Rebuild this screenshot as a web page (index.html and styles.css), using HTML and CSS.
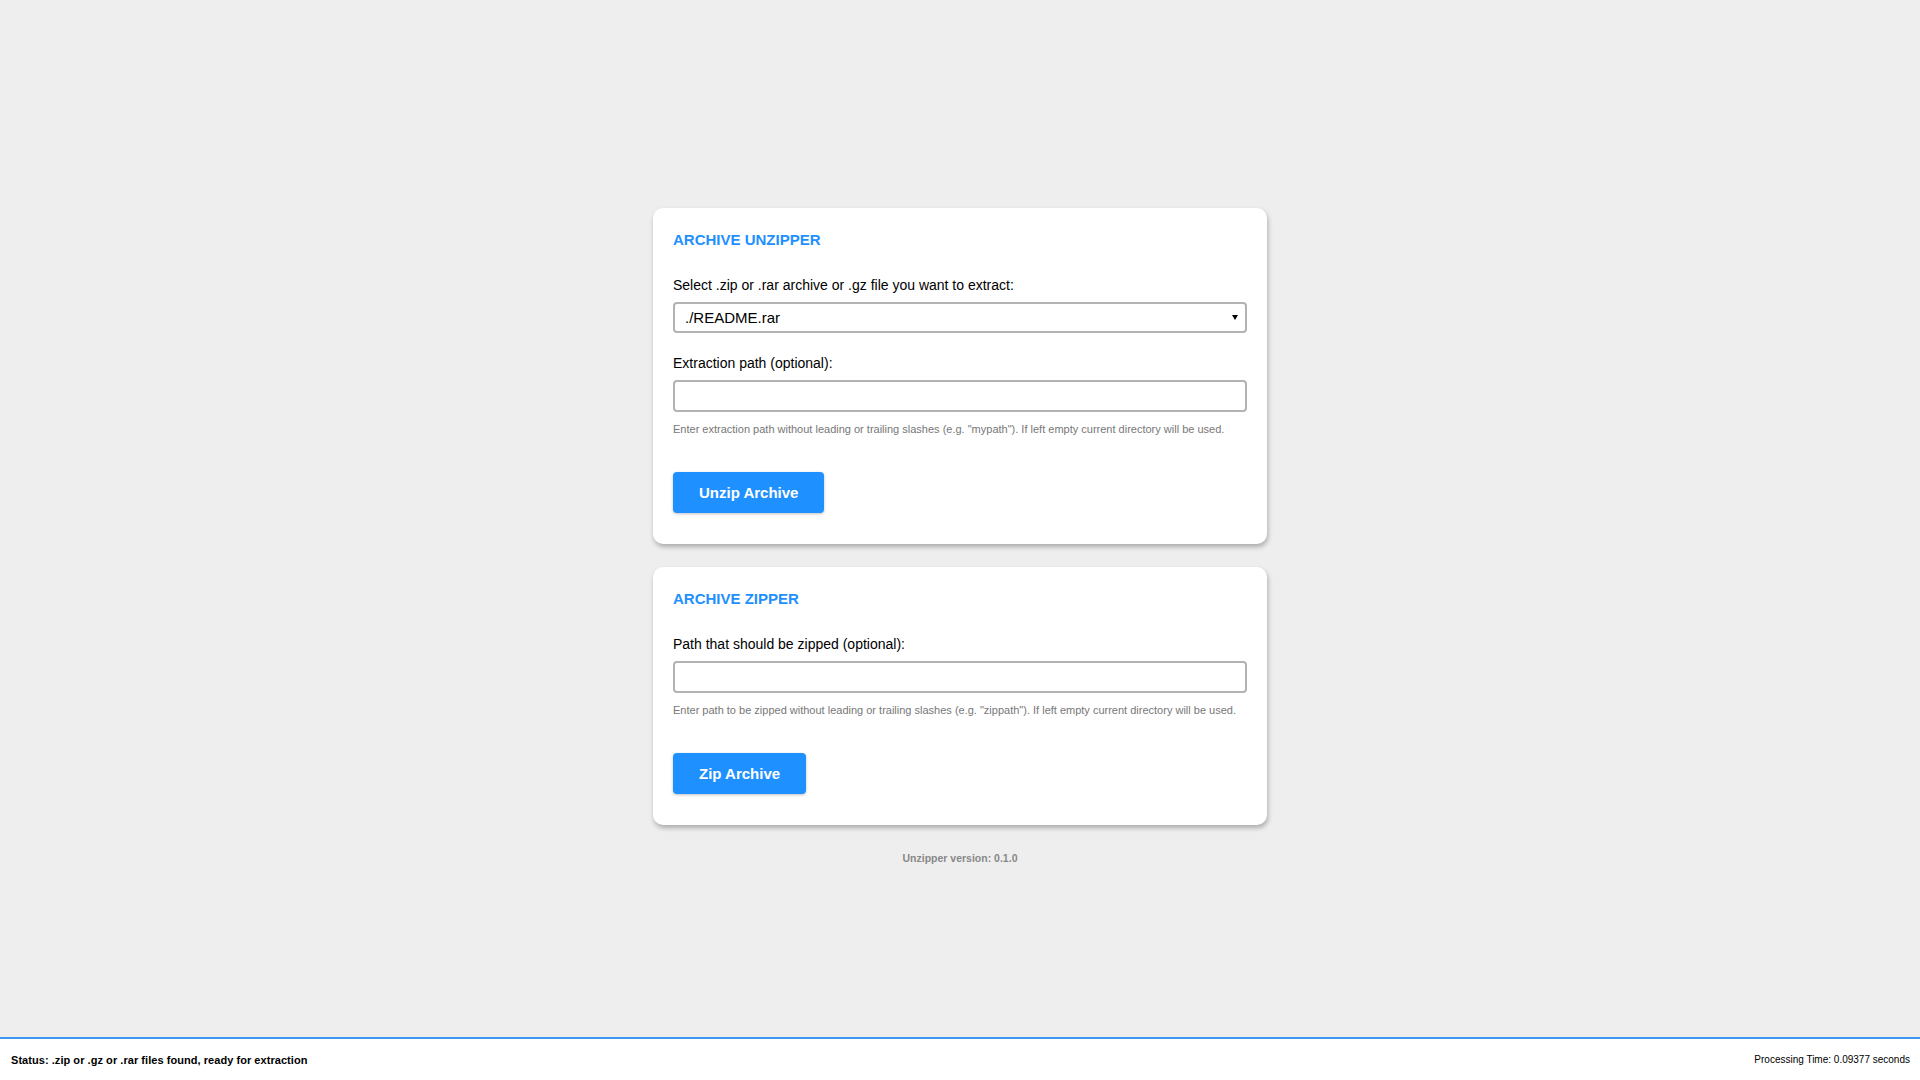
FILE: index.html
```html
<!DOCTYPE html>
<html lang="en">
<head>
    <meta charset="UTF-8">
    <meta name="viewport" content="width=device-width, initial-scale=1.0">
    <title>Unzipper</title>
    <link rel="stylesheet" href="styles.css">
</head>
<body>
    <main class="wrapper">
        <form class="card" action="#" method="post">
            <h2>Archive Unzipper</h2>
            <div class="field">
                <label for="zipfile">Select .zip or .rar archive or .gz file you want to extract:</label>
                <div class="select-wrap">
                    <select id="zipfile" name="zipfile">
                        <option value="./README.rar">./README.rar</option>
                    </select>
                </div>
            </div>
            <div class="field">
                <label for="extpath">Extraction path (optional):</label>
                <input type="text" id="extpath" name="extpath">
                <p class="info">Enter extraction path without leading or trailing slashes (e.g. "mypath"). If left empty current directory will be used.</p>
            </div>
            <button type="submit" class="btn">Unzip Archive</button>
        </form>

        <form class="card" action="#" method="post">
            <h2>Archive Zipper</h2>
            <div class="field">
                <label for="zippath">Path that should be zipped (optional):</label>
                <input type="text" id="zippath" name="zippath">
                <p class="info">Enter path to be zipped without leading or trailing slashes (e.g. "zippath"). If left empty current directory will be used.</p>
            </div>
            <button type="submit" class="btn">Zip Archive</button>
        </form>

        <p class="version">Unzipper version: 0.1.0</p>
    </main>

    <footer class="status">
        <span class="status-msg">Status: .zip or .gz or .rar files found, ready for extraction</span>
        <span class="status-time">Processing Time: 0.09377 seconds</span>
    </footer>
</body>
</html>
```

FILE: styles.css
```css
html, body {
    height: 100%;
}
body {
    margin: 0;
    font-family: "Liberation Sans", Arial, sans-serif;
    background-color: #eeeeee;
    color: #000;
    display: flex;
    flex-direction: column;
}
.wrapper {
    flex: 1;
    display: flex;
    flex-direction: column;
    align-items: center;
    padding-top: 208px;
}
.card {
    box-sizing: border-box;
    width: 614px;
    background: #fff;
    padding: 21px 20px 31px;
    border-radius: 10px;
    box-shadow: 1px 3px 5px rgba(0,0,0,0.28);
    margin-bottom: 23px;
}
.card h2 {
    margin: 2px 0 29px;
    font-size: 15px;
    line-height: 17px;
    font-weight: bold;
    text-transform: uppercase;
    color: #1e90ff;
}
.field {
    margin-bottom: 22px;
}
.field label {
    display: block;
    font-size: 14px;
    line-height: 16px;
    margin-bottom: 9px;
}
.select-wrap {
    position: relative;
}
.select-wrap::after {
    content: "";
    position: absolute;
    right: 9px;
    top: 13px;
    border-left: 3px solid transparent;
    border-right: 3px solid transparent;
    border-top: 5px solid #000;
    pointer-events: none;
}
select,
input[type="text"] {
    box-sizing: border-box;
    display: block;
    width: 100%;
    height: 32px;
    padding: 0 10px;
    font-family: inherit;
    font-size: 15px;
    color: #000;
    background: #fff;
    border: 2px solid #b3b3b3;
    border-radius: 4px;
    outline: none;
}
select {
    height: 31px;
    -webkit-appearance: none;
    appearance: none;
}
.info {
    margin: 11px 0 0;
    font-size: 11px;
    line-height: 13px;
    color: #777;
}
.field:last-of-type {
    margin-bottom: 36px;
}
.btn {
    height: 41px;
    padding: 0 26px;
    border: none;
    border-radius: 4px;
    background-color: #1e90ff;
    color: #fff;
    font-family: inherit;
    font-size: 15px;
    font-weight: bold;
    cursor: pointer;
    box-shadow: 0 1px 3px rgba(0,0,0,0.25);
}
.btn:hover {
    background-color: #1873cc;
}
.version {
    margin: 4px 0 0;
    font-size: 10.5px;
    line-height: 13px;
    font-weight: bold;
    color: #888;
}
.status {
    display: flex;
    justify-content: space-between;
    align-items: center;
    height: 41px;
    padding: 0 10px 0 11px;
    background: #fff;
    border-top: 2px solid #3d97f0;
}
.status-msg {
    font-size: 11px;
    font-weight: bold;
    letter-spacing: 0.05px;
}
.status-time {
    font-size: 10px;
}
```
